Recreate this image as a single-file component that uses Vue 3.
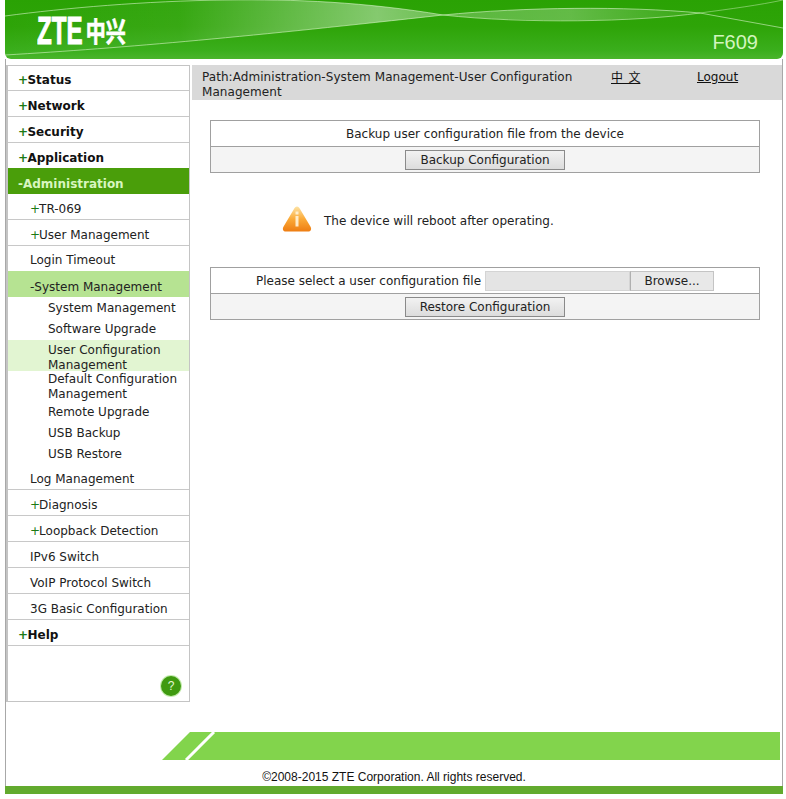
<script setup>
const topTail = [
  { label: 'Log Management', plus: false },
  { label: 'Diagnosis', plus: true },
  { label: 'Loopback Detection', plus: true },
  { label: 'IPv6 Switch', plus: false },
  { label: 'VoIP Protocol Switch', plus: false },
  { label: '3G Basic Configuration', plus: false }
]
const subs = [
  { label: 'System Management' },
  { label: 'Software Upgrade' },
  { label: 'User Configuration Management', active: true },
  { label: 'Default Configuration Management', tall: true },
  { label: 'Remote Upgrade' },
  { label: 'USB Backup' },
  { label: 'USB Restore' }
]
</script>

<template>
  <div class="page">
    <header class="banner">
      <svg class="swoosh" viewBox="0 0 778 59" preserveAspectRatio="none" aria-hidden="true">
        <defs>
          <linearGradient id="lensA" x1="0" x2="1" y1="0" y2="0">
            <stop offset="0" stop-color="#fff" stop-opacity="0" />
            <stop offset="0.4" stop-color="#fff" stop-opacity="0.05" />
            <stop offset="0.85" stop-color="#fff" stop-opacity="0.42" />
            <stop offset="1" stop-color="#fff" stop-opacity="0.3" />
          </linearGradient>
          <linearGradient id="lensB" x1="0" x2="1" y1="0" y2="0">
            <stop offset="0" stop-color="#fff" stop-opacity="0.22" />
            <stop offset="0.5" stop-color="#fff" stop-opacity="0.26" />
            <stop offset="1" stop-color="#fff" stop-opacity="0.05" />
          </linearGradient>
        </defs>
        <path d="M0 55C120 48 250 36 438 15C360 2 290 -1 220 0C140 1 60 8 0 16Z" fill="url(#lensA)" />
        <path d="M438 15C520 7 620 6 695 13C620 22 520 23 438 15Z" fill="url(#lensB)" />
        <path d="M0 55C120 48 250 36 438 15C520 24 630 22 695 13" fill="none" stroke="#d8f5c8" stroke-opacity="0.6" stroke-width="1" />
        <path d="M0 16C60 8 140 1 220 0C290 -1 360 2 438 15C520 7 620 6 695 13L778 28" fill="none" stroke="#e8fbdc" stroke-opacity="0.55" stroke-width="1" />
        <path d="M695 13C725 9 755 5 778 0" fill="none" stroke="#d8f5c8" stroke-opacity="0.45" stroke-width="1" />
      </svg>
      <div class="logo"><span class="logo-zte">ZTE</span><span class="logo-cn">中兴</span></div>
      <div class="model">F609</div>
    </header>

    <div class="frame">
      <div class="main">
        <nav class="side">
          <div class="top top-first"><b class="plus">+</b>Status</div>
          <div class="top"><b class="plus">+</b>Network</div>
          <div class="top"><b class="plus">+</b>Security</div>
          <div class="top top-last"><b class="plus">+</b>Application</div>
          <div class="top top-open">-Administration</div>
          <div class="second"><span class="plus-thin">+</span>TR-069</div>
          <div class="second"><span class="plus-thin">+</span>User Management</div>
          <div class="second second-plain">Login Timeout</div>
          <div class="second second-open">-System Management</div>
          <div class="sublist">
            <div
              v-for="s in subs"
              :key="s.label"
              class="sub"
              :class="{ 'sub-active': s.active, 'sub-tall': s.tall }"
            >{{ s.label }}</div>
          </div>
          <div v-for="t in topTail" :key="t.label" class="second">
            <span v-if="t.plus" class="plus-thin">+</span>{{ t.label }}
          </div>
          <div class="top"><b class="plus">+</b>Help</div>
          <div class="help-row"><span class="help">?</span></div>
        </nav>

        <section class="content">
          <div class="path">
            <div class="path-text">Path:Administration-System Management-User Configuration Management</div>
            <a class="lang">中&nbsp;&nbsp;文</a>
            <a class="logout">Logout</a>
          </div>

          <div class="panel panel-first">
            <div class="row">Backup user configuration file from the device</div>
            <div class="row row-alt"><button class="btn" type="button">Backup Configuration</button></div>
          </div>

          <div class="notice">
            <svg class="warn" viewBox="0 0 30 28" aria-hidden="true">
              <defs>
                <linearGradient id="warnFill" x1="0" x2="0" y1="0" y2="1">
                  <stop offset="0" stop-color="#fde3a4" />
                  <stop offset="0.5" stop-color="#fbaa38" />
                  <stop offset="1" stop-color="#ee7d12" />
                </linearGradient>
              </defs>
              <path d="M15 1.5C13.6 1.5 12.8 2.6 12 4L1.6 21.5C0 24.4 1.2 26.5 4 26.5H26C28.8 26.5 30 24.4 28.4 21.5L18 4C17.2 2.6 16.4 1.5 15 1.5Z" fill="url(#warnFill)" />
              <rect x="13.5" y="11" width="3" height="10.5" fill="#fff3d8" opacity="0.9" />
              <rect x="13.5" y="6.5" width="3" height="3" fill="#fff3d8" opacity="0.9" />
            </svg>
            <span class="notice-text">The device will reboot after operating.</span>
          </div>

          <div class="panel">
            <div class="row">
              <span class="file-label">Please select a user configuration file</span>
              <span class="file-box"></span>
              <span class="browse">Browse...</span>
            </div>
            <div class="row row-alt"><button class="btn" type="button">Restore Configuration</button></div>
          </div>
        </section>
      </div>

      <div class="band">
        <svg class="band-art" viewBox="0 0 618 28" preserveAspectRatio="none" aria-hidden="true">
          <path d="M0 28L28 0H618V28Z" fill="#82d44c" />
          <path d="M24 28L52 0" stroke="#fff" stroke-width="3" fill="none" />
        </svg>
      </div>
      <div class="copy">©2008-2015 ZTE Corporation. All rights reserved.</div>
    </div>
    <div class="base"></div>
  </div>
</template>

<style>
html, body { margin: 0; background: #fff; }
</style>

<style scoped>
.page {
  width: 778px;
  margin-left: 5px;
  font-family: "DejaVu Sans", Verdana, sans-serif;
  font-size: 12px;
  color: #222;
}
.banner {
  position: relative;
  height: 59px;
  border-radius: 0 0 6px 6px;
  overflow: hidden;
  background: linear-gradient(#2aa204 0%, #2ea408 45%, #3aae1c 85%, #4ab52c 100%);
}
.swoosh { position: absolute; inset: 0; width: 100%; height: 100%; }
.logo {
  position: absolute;
  left: 32px;
  top: 13px;
  display: flex;
  align-items: center;
  color: #fff;
  height: 36px;
}
.logo-zte {
  font-family: "Liberation Sans", sans-serif;
  font-weight: 700;
  font-size: 39px;
  line-height: 36px;
  display: inline-block;
  margin-right: -27px;
  -webkit-text-stroke: 1px #fff;
  transform: scaleX(0.62);
  transform-origin: left center;
}
.logo-cn {
  font-family: "Noto Sans CJK SC", sans-serif;
  font-weight: 700;
  font-size: 20px;
  line-height: 20px;
  margin-left: 2px;
  display: inline-block;
  -webkit-text-stroke: 0.5px #fff;
  transform: scaleY(1.35);
}
.model {
  position: absolute;
  right: 25px;
  top: 30px;
  font-family: "Liberation Sans", sans-serif;
  font-size: 20px;
  line-height: 24px;
  color: #d2f5be;
}
.frame {
  border-left: 1px solid #a8a8a8;
  border-right: 1px solid #a8a8a8;
  padding-top: 6px;
  height: 727px;
  box-sizing: border-box;
}
.main { display: flex; align-items: flex-start; height: 637px; }
.side {
  width: 184px;
  height: 637px;
  box-sizing: border-box;
  border: 1px solid #c4c4c4;
  border-left-width: 2px;
  flex: none;
  display: flex;
  flex-direction: column;
}
.top {
  height: 26px;
  box-sizing: border-box;
  padding: 8px 0 0 10px;
  line-height: 15px;
  font-weight: 700;
  font-size: 12px;
  color: #111;
  border-bottom: 1px solid #c8c8c8;
}
.top-first { height: 25px; padding-top: 7px; }
.top-last { height: 25px; border-bottom: 0; }
.plus { color: #1c7a14; letter-spacing: -0.6px; }
.plus-thin { color: #1c7a14; letter-spacing: -1px; }
.top-open {
  background: #4a9e0a;
  color: #d8f6c0;
  border-bottom: 0;
  padding-top: 9px;
}
.second {
  height: 26px;
  box-sizing: border-box;
  padding: 8px 0 0 22px;
  line-height: 15px;
  border-bottom: 1px solid #c8c8c8;
}
.second-plain { height: 25px; border-bottom: 0; padding-top: 7px; }
.second-open {
  background: #b6e392;
  border-bottom: 0;
  padding-top: 9px;
}
.sub {
  height: 21px;
  box-sizing: border-box;
  padding: 4px 6px 0 40px;
  line-height: 15px;
}
.sub-tall { height: 30px; padding-top: 1px; }
.sub-active { height: 31px; margin-top: 1px; padding-top: 3px; background: #e2f5d2; }
.help-row {
  flex: 1;
  display: flex;
  justify-content: flex-end;
  align-items: flex-end;
  padding: 0 8px 5px 0;
}
.help {
  width: 20px;
  height: 20px;
  border-radius: 50%;
  background: #3f9a10;
  box-shadow: 0 0 0 1px #c4ecae;
  color: #e4f7d4;
  font-size: 12px;
  line-height: 20px;
  text-align: center;
  font-family: "Liberation Sans", sans-serif;
}
.content { flex: 1; margin-left: 2px; min-width: 0; }
.path {
  position: relative;
  height: 35px;
  background: #d9d9d9;
  padding-left: 10px;
  box-sizing: border-box;
  line-height: 15px;
  padding-top: 5px;
}
.path-text { width: 395px; letter-spacing: 0.06px; }
.lang, .logout {
  position: absolute;
  top: 4px;
  color: #111;
  text-decoration: underline;
}
.lang { left: 419px; font-family: "Noto Sans CJK SC", sans-serif; }
.logout { left: 505px; top: 5px; }
.panel {
  width: 550px;
  margin-left: 18px;
  border: 1px solid #a0a0a0;
  box-sizing: border-box;
}
.panel-first { margin-top: 20px; }
.row {
  height: 26px;
  box-sizing: border-box;
  display: flex;
  align-items: center;
  justify-content: center;
  border-bottom: 1px solid #a0a0a0;
}
.row-alt { background: #f4f4f4; border-bottom: 0; height: 25px; }
.btn {
  width: 160px;
  height: 20px;
  padding: 0;
  font: inherit;
  color: #222;
  border: 1px solid #8a8a8a;
  background: linear-gradient(#f2f2f2, #dcdcdc);
}
.notice {
  display: flex;
  align-items: center;
  height: 94px;
  padding-left: 90px;
}
.notice-text { padding-top: 2px; }
.warn { width: 30px; height: 28px; margin-right: 12px; margin-top: -2px; flex: none; }
.file-label { margin-right: 4px; }
.file-box {
  width: 143px;
  height: 18px;
  background: #e4e4e4;
  border: 1px solid #d4d4d4;
}
.browse {
  width: 82px;
  height: 18px;
  text-align: center;
  line-height: 18px;
  background: #e8e8e8;
  border: 1px solid #c4c4c4;
  border-left-color: #b0b0b0;
}
.band { margin-left: 156px; margin-top: 30px; width: 618px; height: 28px; }
.band-art { display: block; width: 100%; height: 100%; }
.copy {
  margin-top: 9px;
  text-align: center;
  margin-left: 8px;
  width: 760px;
  font-family: "Liberation Sans", sans-serif;
  font-size: 12px;
  line-height: 16px;
  color: #111;
}
.base { height: 8px; background: #62aa2e; }
</style>
